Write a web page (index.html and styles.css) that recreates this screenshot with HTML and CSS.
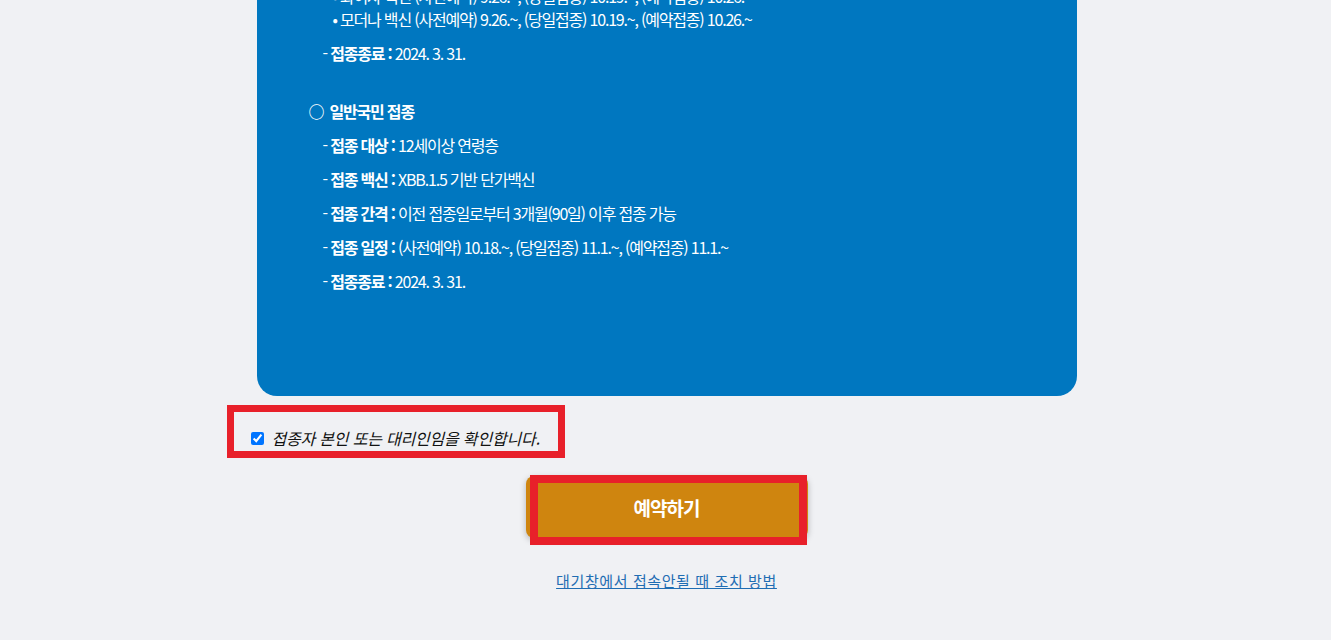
FILE: index.html
```html
<!DOCTYPE html>
<html lang="ko">
<head>
  <meta charset="UTF-8">
  <title>코로나19 예방접종 예약</title>
  <link rel="stylesheet" href="styles.css">
</head>
<body>
  <div class="wrap">
    <div class="notice">
      <div class="item">
        <p>- <b>접종 일정 :</b></p>
        <p class="sub">• 화이자 백신 (사전예약) 9.26.~, (당일접종) 10.19.~, (예약접종) 10.26.~</p>
        <p class="sub">• 모더나 백신 (사전예약) 9.26.~, (당일접종) 10.19.~, (예약접종) 10.26.~</p>
      </div>
      <p class="item">- <b>접종종료 :</b> 2024. 3. 31.</p>

      <h3 class="group"><span class="circle">○</span>일반국민 접종</h3>
      <p class="item">- <b>접종 대상 :</b> 12세이상 연령층</p>
      <p class="item">- <b>접종 백신 :</b> XBB.1.5 기반 단가백신</p>
      <p class="item">- <b>접종 간격 :</b> 이전 접종일로부터 3개월(90일) 이후 접종 가능</p>
      <p class="item">- <b>접종 일정 :</b> (사전예약) 10.18.~, (당일접종) 11.1.~, (예약접종) 11.1.~</p>
      <p class="item">- <b>접종종료 :</b> 2024. 3. 31.</p>
    </div>

    <label class="agree">
      <input type="checkbox" id="agree" checked>
      <span>접종자 본인 또는 대리인임을 확인합니다.</span>
    </label>

    <div class="btn-area">
      <button type="button" class="btn-reserve">예약하기</button>
      <span class="mark"></span>
    </div>

    <p class="help"><a href="#">대기창에서 접속안될 때 조치 방법</a></p>
  </div>
</body>
</html>
```

FILE: styles.css
```css
body {
  margin: 0;
  background: #f0f1f4;
  font-family: "Noto Sans CJK KR", "Noto Sans", sans-serif;
  color: #222;
}

.wrap {
  width: 880px;
  margin: 0 auto;
  padding-left: 2px;
  overflow: hidden;
}

.notice {
  margin: -39px 30px 0;
  padding: 0 52px 93px;
  background: #0077c0;
  border-radius: 20px;
  color: #fff;
  font-size: 16px;
  letter-spacing: -1.2px;
}

.notice p {
  margin: 0;
  line-height: 24px;
}

.notice .item {
  margin: 0 0 10px 14px;
}

.notice .sub {
  line-height: 23px;
  padding-left: 10px;
}

.notice b {
  font-weight: 700;
}

.group {
  margin: 34px 0 10px;
  font-size: 16px;
  line-height: 24px;
  font-weight: 700;
}

.circle {
  display: inline-block;
  width: 21px;
}

.agree {
  display: inline-flex;
  align-items: center;
  margin-top: 9px;
  padding: 16px 18px 3px 13px;
  border: 7px solid #e8202a;
  font-size: 16px;
  line-height: 20px;
  font-style: italic;
  color: #111;
  letter-spacing: -0.2px;
}

.agree span {
  margin-left: 5px;
}

.btn-area {
  position: relative;
  width: 282px;
  margin: 18px auto 0;
}

.btn-reserve {
  display: block;
  width: 282px;
  height: 62px;
  border: none;
  border-radius: 8px;
  background: #cf850f;
  box-shadow: 0 2px 6px rgba(0, 0, 0, 0.25);
  color: #fff;
  font-family: inherit;
  font-size: 19px;
  font-weight: 700;
  letter-spacing: -1px;
}

.mark {
  position: absolute;
  left: 4px;
  top: -1px;
  width: 277px;
  height: 70px;
  box-sizing: border-box;
  border: 8px solid #e8202a;
}

.help {
  margin: 33px 0 0;
  text-align: center;
  font-size: 15px;
  line-height: 20px;
  letter-spacing: 0.6px;
}

.help a {
  color: #1f6db3;
}
```
